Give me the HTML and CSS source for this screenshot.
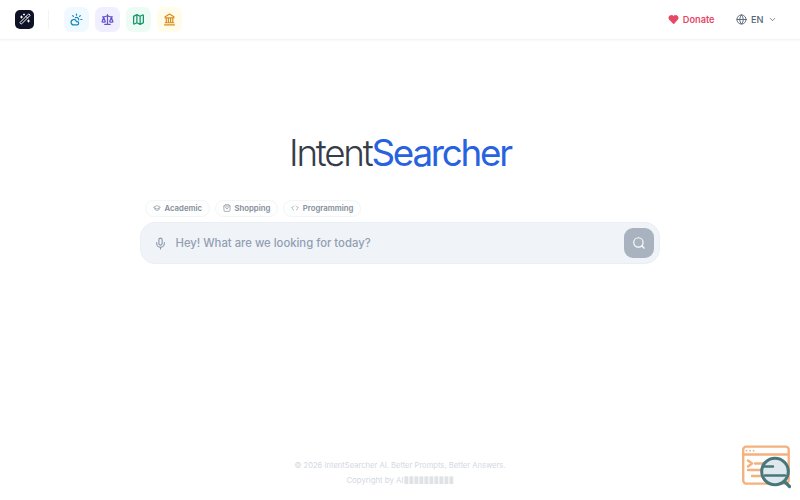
FILE: index.html
```html
<!DOCTYPE html>
<html lang="en">
<head>
<meta charset="utf-8">
<title>IntentSearcher</title>
<link rel="stylesheet" href="styles.css">
</head>
<body>
<header class="bar">
  <a class="logo"><svg viewBox="0 0 24 24"><path d="m21.64 3.64-1.28-1.28a1.21 1.21 0 0 0-1.72 0L2.36 18.64a1.21 1.21 0 0 0 0 1.72l1.28 1.28a1.2 1.2 0 0 0 1.72 0L21.64 5.36a1.2 1.2 0 0 0 0-1.72M14 7l3 3M5 6v4M19 14v4M10 2v2M7 8H3M21 16h-4M11 3H9"/></svg></a>
  <span class="divider"></span>
  <nav class="tools">
    <a class="tool sky"><svg viewBox="0 0 24 24"><path d="M12 2v2M4.93 4.93l1.41 1.41M20 12h2M19.07 4.93l-1.41 1.41M15.947 12.65a4 4 0 0 0-5.925-4.128M13 22H7a5 5 0 1 1 4.9-6H13a3 3 0 0 1 0 6Z"/></svg></a>
    <a class="tool violet"><svg viewBox="0 0 24 24"><path d="m16 16 3-8 3 8c-.87.65-1.92 1-3 1s-2.13-.35-3-1ZM2 16l3-8 3 8c-.87.65-1.92 1-3 1s-2.13-.35-3-1ZM7 21h10M12 3v18M3 7h2c2 0 5-1 7-2 2 1 5 2 7 2h2"/></svg></a>
    <a class="tool green"><svg viewBox="0 0 24 24"><path d="M14.106 5.553a2 2 0 0 0 1.788 0l3.659-1.83A1 1 0 0 1 21 4.619v12.764a1 1 0 0 1-.553.894l-4.553 2.277a2 2 0 0 1-1.788 0l-4.212-2.106a2 2 0 0 0-1.788 0l-3.659 1.83A1 1 0 0 1 3 19.381V6.618a1 1 0 0 1 .553-.894l4.553-2.277a2 2 0 0 1 1.788 0zM15 5.764v15M9 3.236v15"/></svg></a>
    <a class="tool amber"><svg viewBox="0 0 24 24"><path d="M3 22h18M6 18v-7M10 18v-7M14 18v-7M18 18v-7M4 18h16M12 2l8 5v2H4V7z"/></svg></a>
  </nav>
  <a class="donate"><svg viewBox="0 0 24 24"><path d="M19 14c1.49-1.46 3-3.21 3-5.5A5.5 5.5 0 0 0 16.500 3c-1.760 0-3 .5-4.500 2-1.500-1.500-2.740-2-4.500-2A5.500 5.500 0 0 0 2 8.500c0 2.300 1.500 4.050 3 5.500l7 7Z"/></svg>Donate</a>
  <a class="lang"><svg viewBox="0 0 24 24"><circle cx="12" cy="12" r="10"/><path d="M12 2a14.500 14.500 0 0 0 0 20 14.500 14.500 0 0 0 0-20M2 12h20"/></svg><span>EN</span><svg class="chev" viewBox="0 0 24 24"><path d="m6 9 6 6 6-6"/></svg></a>
</header>
<main>
  <h1>Intent<span>Searcher</span></h1>
  <div class="chips">
    <a class="chip academic"><svg viewBox="0 0 24 24"><path d="M21.420 10.922a1 1 0 0 0-.019-1.838L12.830 5.180a2 2 0 0 0-1.660 0L2.600 9.080a1 1 0 0 0 0 1.832l8.570 3.908a2 2 0 0 0 1.660 0zM6 12.500V16a6 3 0 0 0 12 0v-3.500"/></svg>Academic</a>
    <a class="chip shopping"><svg viewBox="0 0 24 24"><path d="M3 6l3-4h12l3 4v14a2 2 0 0 1-2 2H5a2 2 0 0 1-2-2zM3 6h18M16 10a4 4 0 0 1-8 0"/></svg>Shopping</a>
    <a class="chip programming"><svg viewBox="0 0 24 24"><path d="m16 18 6-6-6-6M8 6l-6 6 6 6"/></svg>Programming</a>
  </div>
  <div class="search">
    <svg class="mic" viewBox="0 0 24 24"><path d="M12 19v3M19 10v2a7 7 0 0 1-14 0v-2"/><rect x="9" y="2" width="6" height="13" rx="3"/></svg>
    <span class="hint">Hey! What are we looking for today?</span>
    <a class="go"><svg viewBox="0 0 24 24"><circle cx="11" cy="11" r="8"/><path d="m21 21-4.300-4.300"/></svg></a>
  </div>
</main>
<footer>
  <p class="line1">© 2026 IntentSearcher AI. Better Prompts, Better Answers.</p>
  <p class="line2">Copyright by AI<span class="boxes">▮▮▮▮▮▮▮▮▮▮</span></p>
</footer>
<svg class="badge" viewBox="0 0 50 44">
  <g fill="none" stroke="#f3b17e" stroke-width="2.400">
    <rect x="2.200" y="1.600" width="45.500" height="37" rx="3"/>
    <path d="M2 9.500h45M7 15.500l4 3-4 3M14 18.500h8M7 25h14M11 31h10"/>
    <path d="M5.500 5.700h.1M9 5.700h.1M12.500 5.700h.1" stroke-width="1.700"/>
  </g>
  <circle cx="34" cy="26.500" r="13.300" fill="#dfe8ef" stroke="#477779" stroke-width="3"/>
  <path d="M43.500 36.500l5 5" stroke="#477779" stroke-width="3.200"/>
  <path d="M23 21.500h9M24 30.500h20" stroke="#477779" stroke-width="2.400" stroke-linecap="round"/>
</svg>
</body>
</html>
```
FILE: styles.css
```css
* { box-sizing: border-box; }
body {
  margin: 0;
  height: 500px;
  display: flex;
  flex-direction: column;
  overflow: hidden;
  background: #fff;
  font-family: Inter, "Liberation Sans", sans-serif;
}
svg {
  display: block;
  flex: none;
  width: 13px;
  height: 13px;
  fill: none;
  stroke: currentColor;
  stroke-width: 2;
  stroke-linecap: round;
  stroke-linejoin: round;
}
.bar {
  height: 40px;
  flex: none;
  display: flex;
  align-items: center;
  padding: 0 23px 1px 15px;
  border-bottom: 1px solid #f3f4f5;
  box-shadow: 0 1px 2px rgba(0, 0, 0, .03);
}
.logo {
  width: 19px;
  height: 19px;
  display: grid;
  place-items: center;
  border-radius: 5px;
  background: #0d1226;
  color: #fff;
}
.logo svg { width: 12px; height: 12px; }
.divider { width: 1px; height: 19px; margin: 0 15px 0 14px; background: #f3f4f7; }
.tools { display: flex; gap: 6px; }
.tool {
  width: 25px;
  height: 25px;
  display: grid;
  place-items: center;
  border-radius: 7px;
}
.tool svg { stroke-width: 2.300; }
.sky { background: #eff9ff; color: #1689bd; }
.violet { background: #efefff; color: #6654cf; }
.green { background: #ecfcf4; color: #159567; }
.amber { background: #fffce9; color: #dc8c22; }
.donate {
  display: flex;
  align-items: center;
  gap: 3.500px;
  margin-left: auto;
  font-size: 9.200px;
  font-weight: 600;
  color: #e64766;
}
.donate svg { width: 11px; height: 11px; fill: currentColor; }
.lang {
  display: flex;
  align-items: center;
  margin-left: 21px;
  gap: 4.500px;
  font-size: 9.200px;
  font-weight: 500;
  color: #566377;
}
.lang svg { width: 11px; height: 11px; }
.lang .chev { width: 9px; height: 9px; }
main { width: 520px; margin: 0 auto; }
h1 {
  margin: 89px 0 0;
  height: 48px;
  line-height: 48px;
  text-align: center;
  font-size: 36.800px;
  font-weight: 300;
  letter-spacing: -2.250px;
  color: #353d49;
}
h1 span { font-weight: 400; color: #2962df; }
.chips { display: flex; gap: 5px; margin: 23px 0 0 5px; }
.chip {
  display: flex;
  align-items: center;
  gap: 3.500px;
  height: 17px;
  padding: 0 7px 1px;
  border: 1px solid #f3f5f8;
  border-radius: 9px;
  background: #fdfefe;
  font-size: 7.750px;
  font-weight: 600;
  color: #848c98;
}
.chip svg { width: 8px; height: 8px; }
.search {
  display: flex;
  align-items: center;
  height: 42px;
  margin-top: 5px;
  padding: 0 5px 0 13px;
  border: 1px solid #eaeff4;
  border-radius: 15px;
  background: #f0f4f9;
}
.mic { color: #8995a8; }
.hint { margin-left: 8.500px; font-size: 11.300px; font-weight: 500; color: #929eb2; }
.go {
  width: 30px;
  height: 30px;
  display: grid;
  place-items: center;
  margin-left: auto;
  border-radius: 9px;
  background: #a9b3bf;
  color: #fff;
}
.go svg { width: 14px; height: 14px; }
footer {
  margin-top: auto;
  padding-bottom: 12px;
  text-align: center;
  color: #d3d8df;
}
footer p { margin: 0; height: 15px; line-height: 15px; }
.line1 { font-size: 7.600px; }
.line2 { font-size: 7.800px; }
.boxes {
  font-family: "DejaVu Sans", sans-serif;
  font-size: 10px;
  line-height: 1;
  letter-spacing: -.500px;
  color: #dfe3e6;
}
.badge {
  position: absolute;
  left: 741px;
  top: 445px;
  width: 50px;
  height: 44px;
}
```
